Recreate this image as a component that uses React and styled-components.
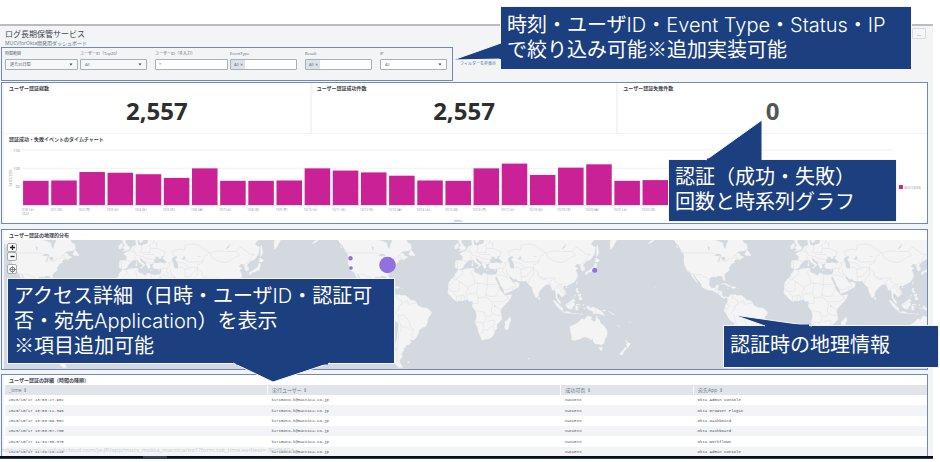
import React from "react";
import styled, { createGlobalStyle } from "styled-components";

const navy = "#1c3f80";
const frameBlue = "#7089b5";

const GlobalStyle = createGlobalStyle`
  *, *::before, *::after { box-sizing: border-box; }
  body {
    margin: 0;
    background: #fff;
    color: #3c444d;
    font-family: "Open Sans", "Noto Sans CJK JP", sans-serif;
  }
  button, input, select { font: inherit; color: inherit; }
`;

const Page = styled.div`
  position: relative;
  padding: 24px 7px 3px 0;
  overflow: hidden;
`;

const Shell = styled.main`
  border-top: 2px solid #bcbcbc;
  background: #f2f4f6;
  padding: 0 5px 0 1px;
`;

const Header = styled.header`
  display: flex;
  justify-content: space-between;
  align-items: flex-start;
  height: 21px;
  padding: 2px 2px 0 4px;
`;

const Title = styled.h1`
  margin: 0;
  font-size: 8px;
  line-height: 12px;
  font-weight: 400;
`;

const Subtitle = styled.p`
  margin: 0;
  font-size: 5px;
  line-height: 6px;
  color: #6b747e;
`;

const MoreButton = styled.button`
  width: 14px;
  height: 11px;
  padding: 0;
  border: 1px solid #d5dae0;
  border-radius: 1px;
  background: #f5f6f8;
  font-size: 5px;
  line-height: 6px;
`;

const FilterRow = styled.div`
  display: flex;
  align-items: center;
  gap: 7px;
  margin-bottom: 1px;
`;

const FilterForm = styled.form`
  display: grid;
  grid-template-columns: repeat(6, 75px);
  border: 1px solid ${frameBlue};
  padding: 3px 0 10px 3px;
  width: 452px;
`;

const Field = styled.div`
  display: flex;
  flex-direction: column;
  gap: 2px;
  width: ${(p) => (p.$wide ? 73 : 67)}px;
`;

const Label = styled.label`
  font-size: 4px;
  line-height: 6px;
  color: #5c656f;
`;

const controlBox = `
  width: 100%;
  height: 11px;
  border: 1px solid #a6b0bd;
  border-radius: 1px;
  font-size: 4px;
  line-height: 8px;
  color: #5c656f;
`;

const SelectBox = styled.div`
  position: relative;
  display: flex;
`;

const Select = styled.select`
  ${controlBox}
  appearance: none;
  background: ${(p) => (p.$plain ? "#fff" : "#f5f7f9")};
  padding: 0 8px 0 4px;
`;

const Caret = styled.svg`
  position: absolute;
  right: 5px;
  top: 4px;
  width: 4px;
  height: 3px;
  pointer-events: none;
`;

const Input = styled.input`
  ${controlBox}
  background: #fff;
  padding: 0 3px;
`;

const TokenBox = styled.div`
  ${controlBox}
  display: flex;
  background: #fff;
`;

const Token = styled.button`
  flex: none;
  border: 0;
  background: #dde2e9;
  padding: 0 2px 0 3px;
  line-height: 9px;
`;

const TokenInput = styled.input`
  flex: 1;
  min-width: 0;
  border: 0;
  padding: 0 2px;
  background: transparent;
`;

const HideLink = styled.a`
  font-size: 4px;
  line-height: 6px;
  color: #5670a0;
  text-decoration: none;
`;

const Frame = styled.section`
  position: relative;
  border: 1px solid ${frameBlue};
  padding-left: 2px;
  background: #f2f4f6;
  margin-bottom: ${(p) => p.$gap || 0}px;
`;

const StatRow = styled.div`
  display: grid;
  grid-template-columns: 305fr 304fr 308fr;
  gap: 2px;
  margin-bottom: 1px;
`;

const Panel = styled.article`
  background: #fff;
  padding-top: 1px;
`;

const PanelTitle = styled.h2`
  margin: 0 0 0 5px;
  font-size: 5px;
  line-height: 8px;
  font-weight: 700;
  color: #3c444d;
`;

const BigNumber = styled.p`
  margin: 0;
  height: 41px;
  text-align: center;
  font-size: 24px;
  line-height: 38px;
  font-weight: 700;
  color: ${(p) => (p.$muted ? "#555" : "#2e2e2e")};
`;

const ChartSvg = styled.svg`
  display: block;
  width: 100%;
  height: auto;
  font-size: 4px;
  fill: #8b9198;
`;

const Tick = styled.text`
  font-size: 3px;
`;

const MapBox = styled.div`
  position: relative;
  padding-top: 1px;
`;

const MapSvg = styled.svg`
  display: block;
  width: 100%;
  height: auto;
  background: #d4d9e0;
`;

const MapControls = styled.div`
  position: absolute;
  left: 3px;
  top: 4px;
  display: flex;
  flex-direction: column;
`;

const MapButton = styled.button`
  display: flex;
  align-items: center;
  justify-content: center;
  width: 10px;
  height: ${(p) => (p.$tall ? 10 : 9)}px;
  margin-top: ${(p) => (p.$tall ? 3 : 0)}px;
  padding: 0;
  border: 1px solid #a9adb2;
  border-radius: 2px;
  background: #fafafa;
`;

const DataFrame = styled(Frame)`
  height: 82px;
  border-bottom: 0;
  overflow: hidden;
`;

const Table = styled.table`
  width: 100%;
  height: 72px;
  margin-top: 1px;
  table-layout: fixed;
  border-collapse: collapse;
`;

const Th = styled.th`
  width: ${(p) => p.$w};
  height: 10px;
  padding: 0 4px;
  text-align: left;
  font-size: 5px;
  line-height: 10px;
  font-weight: 400;
  color: #6b747e;
  background: #e1e5ea;
  border-left: 1px solid #f8f9fa;
`;

const Row = styled.tr`
  background: #fff;
  &:nth-child(even) { background: #f2f4f6; }
`;

const Td = styled.td`
  padding: 0 4px;
  font-family: "Liberation Mono", monospace;
  font-size: 4px;
  line-height: 8px;
  color: #4c525a;
`;

const StatusUrl = styled.p`
  position: absolute;
  left: 2px;
  bottom: 8px;
  margin: 0;
  font-size: 6px;
  line-height: 7px;
  white-space: nowrap;
  color: #c9d0dc;
`;

const Taskbar = styled.footer`
  height: 3px;
  background: linear-gradient(90deg, transparent 143px, #3a3d44 143px, #3a3d44 167px, transparent 167px), #0c0d12;
  border-bottom: 1px solid ${navy};
`;

const Callout = styled.aside`
  position: absolute;
  left: ${(p) => p.$x}px;
  top: ${(p) => p.$y}px;
  width: ${(p) => p.$w}px;
  height: ${(p) => p.$h}px;
  padding: ${(p) => p.$pad || 3}px 0 0 6px;
  background: ${navy};
  box-shadow: 0 0 0 1px #f3f6fb;
  color: #fff;
  font-family: "Noto Sans CJK JP", sans-serif;
  font-weight: 400;
  font-size: 20px;
  line-height: 25px;
  white-space: nowrap;
`;

const Latin = styled.span`
  font-family: "Inter", sans-serif;
  font-weight: 300;
  line-height: 0;
`;

const Tail = styled.svg`
  position: absolute;
  left: 0;
  top: 0;
  width: 100%;
  height: 100%;
  overflow: visible;
  pointer-events: none;
`;

const values = [
  66, 67, 90, 88, 84, 74, 100, 66, 66, 67, 100, 94, 89, 80, 67, 66, 100, 113, 82, 102, 111, 66, 68,
];
const weekdays = "日月火水木金土";

function TimeChart() {
  const pitch = 28.13;
  return (
    <ChartSvg viewBox="0 0 922 80" role="img" aria-label="認証成功・失敗イベントのタイムチャート">
      {[150, 100, 50, 0].map((v) => (
        <g key={v}>
          <path d={`M18 ${62 - (v * 55) / 150}H889`} stroke={v ? "#eff1f3" : "#d9dce0"} strokeWidth="1" />
          {v > 0 && <text x="16" y={63.5 - (v * 55) / 150} textAnchor="end">{v}</text>}
        </g>
      ))}
      {values.map((v, i) => (
        <g key={i}>
          <rect x={19 + i * pitch} y={62 - (v * 55) / 150} width="25.5" height={(v * 55) / 150} fill="#cb2196" />
          <Tick x={18 + i * pitch} y="68">
            {i === 0 ? "9/30" : `10/${i}`} ({weekdays[(i + 6) % 7]})
          </Tick>
        </g>
      ))}
      <Tick x="18" y="72">2023</Tick>
      <text x="453" y="79" textAnchor="middle">_time</text>
      <text transform="translate(7.5 35) rotate(-90)" textAnchor="middle">SUCCESS</text>
      <rect x="894" y="42" width="4" height="4" fill="#cb2196" />
      <text x="899" y="45.5">SUCCESS</text>
    </ChartSvg>
  );
}

/* Coastlines as flat longitude, latitude lists. */
const land = [
  [-168,66,-165,61,-162,58.7,-157.5,58.7,-158,57.5,-163,55,-160,55.5,-154,58,-152,60,-148,60.5,-145,60.3,-140,59.7,-136,58,-133,55.5,-130,54,-128,51.5,-125,50,-123,49,-124.7,48.4,-124,46,-124.4,43,-124,40.3,-122.5,37.8,-120.6,34.6,-118,33.8,-117,32.5,-115.7,30,-114,28,-112.2,26,-110.5,24,-109.5,23,-110,24.5,-111.5,26.5,-113,28.5,-114.8,31.5,-113,31.2,-111,28,-109,26,-107,24,-105.5,22,-105.5,20,-103.5,18.3,-101,17.3,-97,15.8,-94.5,16.2,-92,14.5,-89,13.3,-87.5,12.8,-85.7,10.5,-83.5,8.5,-81,7.5,-79.5,9,-78,8,-77.5,8.5,-79.5,9.5,-82,9,-83.7,11,-83.3,15,-86,15.8,-88.5,15.8,-88,18.2,-87,21.3,-90,21,-90.7,19,-92,18.5,-94.5,18.2,-96,19.5,-97.5,22,-97.2,26,-97,28,-94.5,29.5,-91.5,29.4,-89.3,29.3,-88.5,30.3,-85.5,30,-84,30,-82.7,28.5,-82,26.5,-81,25.2,-80.2,26,-80.5,28.3,-81.3,30.5,-80,32.5,-77.8,34,-75.7,35.5,-76.2,37.5,-74,40,-72,41.2,-70,41.8,-70.7,43,-67.5,44.6,-65,45.3,-66,43.6,-63,44.7,-60,46,-64,47,-65,49,-69,48,-66,50.2,-60,50.3,-56,52,-57,54.5,-61,56,-62,58.5,-65,60,-70,61,-77,62,-78,59,-77,56.5,-79,54.5,-79.5,51.5,-82,53,-82.5,55.3,-88,56.6,-92.5,57.2,-94.5,59,-95,64,-120,68],
  [-59.3,47.7,-57,51.3,-55.5,50,-53,48,-53,46.7,-56,47],
  [-84.8,22,-82,23.1,-79,22.7,-75,20.7,-74.5,20.2,-77.5,19.9,-78,21,-81.5,22.3],
  [-74,18.5,-73,19.9,-70,19.7,-68.5,18.6,-71,18],
  [-78,18.3,-77,18.5,-76.3,17.9,-77.5,17.8],
  [-77.5,8.5,-76,9.5,-75,11,-72,12,-71.5,10.8,-70,12,-68,10.7,-64,10.5,-62,10.5,-60,8.5,-57,6,-52,4.8,-50,1,-48,-.8,-44,-2.5,-40,-2.8,-37,-5,-35,-6.5,-35,-9,-37.5,-12,-39,-15,-39.2,-18,-41,-22,-44.5,-23,-48,-25.5,-48.7,-28.5,-52,-33,-54,-34.8,-58,-34.3,-57,-36.5,-58,-38.3,-62,-39,-62.5,-41,-65,-41.5,-64,-42.7,-67.3,-46,-66,-48,-69,-50.5,-68.5,-52.5,-65.5,-54.8,-69,-55.5,-73,-53.5,-75.3,-50,-75.5,-46.5,-73,-43,-73.7,-39,-72,-34,-71.4,-30,-70.4,-24,-70.3,-18.5,-74.5,-16,-76.5,-13.5,-79,-8.5,-81.2,-6,-81,-4,-80,-2.5,-80.5,-.5,-79,1.5,-77.5,3.5,-77.5,6.5],
  [-6,35.8,-2,35.1,1,36.5,5,36.8,10,37.3,11,36.8,10.5,34.3,13,32.9,15.3,32.3,18,30.5,20,31,20,32.7,23,32.6,25,31.6,29,30.9,31,31.5,34,31.2,34.7,29.5,33,28.5,35.5,24,37.2,21,37.5,18.5,39.5,15.5,43,12,43.3,11.5,45,10.5,51,11.8,50.8,9.5,48,5,45,2,41.5,-1.7,39.5,-4.5,39,-7,40.5,-10.7,40.5,-15,37.5,-17.7,35,-20,35.4,-24,32.8,-26,32.5,-28.5,30.5,-31.5,27.5,-33.3,22,-34.2,19.7,-34.8,18.3,-34,18,-32,15.2,-27,14.4,-22.5,11.8,-17.5,13.5,-12.5,13.4,-9,12.2,-5.8,9,-1,9.5,3.5,8.5,4.7,5.5,4.4,4.3,6.3,1,6,-2,4.8,-4.5,5.2,-7.7,4.4,-11.5,6.8,-13.3,9,-15,11,-16.8,12.5,-17.5,14.7,-16.3,18,-17,21,-16,23.7,-13.5,27.5,-10,29.5,-9.7,31.5,-8,33.5],
  [49.3,-12,50.5,-15.7,49,-18,47.5,-24.5,45.2,-25.5,43.5,-23,44.3,-20,44,-17,46.5,-15.7],
  [-9,43.2,-9.4,38.8,-8.8,37,-6.5,37,-5.4,36,-2,36.8,-.5,38,0,39.5,3,42,5,43.3,7.5,43.8,10,44,11,42.4,15.5,40,16,38,17,39,18.3,40,15,42,12.5,44.5,13.7,45.6,15.5,44,19.5,41.8,19.4,40.2,21.5,37,23,36.5,24,38,23,40.2,26,40.8,28.8,41,26.2,39.5,27.2,37,30.5,36.3,32.5,36.1,36,36.8,35.8,34,34.3,31.2,35,29.5,37,26.5,39,21.5,42.5,17,43.4,12.7,48,14,52,15.8,55.3,17.8,57.8,19,59.8,22.5,56.5,24.3,54,24.2,51.5,24.8,51.5,26,50,26.5,48.5,29,48.8,30.3,50.7,29.2,52.5,27.4,56.5,27,57.3,25.6,61.5,25.2,66.5,25.3,68,23.7,70.3,20.8,72.8,19.5,73.5,16,76,10,77.5,8,79.8,10.3,80.3,14,82.2,16.7,86.8,20.8,89,21.8,91.5,22.5,94,18.5,94.5,16,97.3,17,98.5,13,98.5,8.5,101,4,103.5,1.4,103.3,4.5,100.3,7.5,99.3,10,100,13.3,102.2,12.2,104.8,8.7,107,10.5,109.2,12.5,108.5,15.5,106,18.5,106.8,21,110,20.5,114,22.4,117.5,24,120,26.5,122,30,120.5,34,119.3,35.2,122.4,37.2,118.5,38.2,121.3,40.8,124.5,40,125,37.7,126.5,34.5,129.3,35.5,129,37.5,127.5,39.7,131,42.7,135.5,44.2,139.5,48,141,53,137,54,136,55,143,59.3,152,59,156,61.5,164,62.5,162,58,156.5,57,156.8,51,160,53.5,162.8,56.5,166,60,178,63,178,70,20,72,5,62,5.2,59,8,58.1,11,59,13,55.5,16,56.5,17,59,18.8,60,17.5,62,21.5,64,25,65.3,21.5,62,22,60.3,29,60.2,28,59.5,23.5,59.2,24,57,21.5,57.5,21,55.3,18.5,54.7,14,54,11,54.2,10.5,56,10.5,57.7,8.2,57,8.7,54,5,53.4,3,51.5,1.5,50.2,-1.5,49.6,-4.7,48.6,-1.5,46.5,-1.5,43.5],
  [-5.5,50,-3,51.4,-5,52,-4.5,53.4,-3,54,-5,55,-6,57,-5,58.6,-2,57.6,-3,56,-1,54.5,1.7,52.7,1.3,51.2],
  [-10,51.7,-9.7,54,-7,55.3,-5.7,54.5,-6.3,52.2],
  [-24,65.5,-22,64,-18,63.4,-14,65,-17,66.2],
  [8.3,39,8.5,41,9.7,41,9.6,39.2],[8.7,42,9.4,42.9,9.4,41.5],[12.5,37.8,15.5,38.1,15,36.7],[23.6,35.4,26.2,35.2,24.8,34.9],[32.4,34.8,34.3,35.5,33.5,34.7],
  [79.8,9.5,81.8,7,80.5,6,79.8,7.5],
  [95.3,5.6,97.5,5,100.5,2,103.7,-1.2,106,-3,105.8,-5.8,102.5,-4,99,0],
  [105.2,-6.6,108.5,-6.6,111,-6.4,114.5,-7.7,114.3,-8.7,108,-7.7],
  [109,1.5,111.3,2.5,115,5,117,7,119,5.2,117.7,3,118.8,1,116.5,-1.5,115.8,-4,111.7,-3.3,110,-1.5],
  [120,1,124.8,1.5,123,.5,120.3,.3,121,-1,123.2,-1,121.7,-2.3,122.6,-5,121,-4,120.3,-5.6,119.5,-3.3],
  [131,-.8,134,-.8,135,-3.3,138,-1.7,141,-2.6,145.7,-5.2,147.5,-6.3,150.7,-10.5,147,-9.5,143.5,-8.5,141,-9.1,138,-8.3,138.5,-6.5,133,-4,132,-2.8],
  [148.3,-5.6,152,-4.5,151.5,-5.7,149,-6.2],[155,-6,159.5,-8.5,162,-10.5,160,-9.7,156,-7.3],[164,-20.2,167,-22.3,165.5,-21.7],
  [115,-8.4,119,-8.5,123,-8.4,119,-9],[124,-10.2,127.2,-8.5,125,-9],[127.5,1.5,128.5,1,128,-.8],[128,-3.2,130.7,-3.3,129,-3.5],
  [120.5,18.3,122.2,18.3,121.6,16,124,13,123,13.5,120.7,14,120,16],[122,11.7,125.3,12.2,125,10.2,123,9.2],[122,7,125.5,9.7,126.4,7,125.4,5.7,124,6.5],[117.3,8.5,119.5,11.3,118.5,9.5],
  [120.2,23,121.5,25.2,121.9,25,120.8,22],[108.7,19,110.7,20,110,18.4],
  [130,33,131,34,135,35.5,137,37,139.5,38.5,140,41,141.5,41.3,142,39.5,140.8,36,139.8,35,137,34.7,135.7,33.5,133.5,33.5,131.5,31.3,130.3,31.3],
  [140,42,141.7,45.4,145.3,43.5,143.3,42,141,42.5],[142,46.5,142,53,143,54.2,144.5,49,143,47],
  [113.5,-22,114,-26.5,115.8,-32,115,-34.3,118,-35,123.5,-33.9,129,-31.7,134.2,-33,136,-34.8,137.8,-33,138.2,-35.5,140.5,-38,144.5,-38.2,146.5,-39,150,-37.5,151,-34,153,-31,153.5,-28,152.8,-25,149,-20.3,146.3,-18.8,145.3,-15,143.5,-14.3,142.5,-10.8,141.3,-14,140.7,-17.5,138.5,-16.7,135.7,-15,137,-12.2,132.5,-11.3,130.5,-12.7,129.3,-15,126,-14,122.3,-18,118.8,-20],
  [144.7,-40.8,148.2,-40.9,148,-43,146.5,-43.6,145.4,-42.3],
  [172.7,-34.5,175.5,-36.7,178.5,-37.7,177,-39.5,175.2,-41.6,174.8,-39.8,173.8,-39.2,174.8,-37.5],
  [172.7,-40.5,174.3,-41.7,171,-44.3,170.5,-46,168.5,-46.7,166.5,-46,170.5,-43],
  [-61,-51.5,-58,-51.5,-59.5,-52.3],[-67,18.4,-65.7,18.2,-66.8,18],[177.5,-17.5,178.5,-18,177.5,-18.2],[-156,20,-155,19.5,-155.7,19],[69,-49,70.3,-49.4,69,-49.7],
  [-132,54,-131,53,-131.5,52.2],[-128,50.7,-125,49.6,-123.5,48.4,-126,49.2],
];

const water = [
  [-92,46.7,-88.5,48.6,-85,47.8,-84.5,46.5,-88,46.7],
  [-87.8,42,-87.5,44,-86,46,-84.8,45.7,-86.4,44,-86.5,42],
  [-84,46,-80,45.8,-80,44.6,-81.7,43.3,-83.5,43.8],
  [-83.3,41.7,-79,42.9,-81,42.6],[-79.7,43.4,-76.3,43.5,-76.5,44.1],
  [-98,51,-97,50.5,-97,53,-99,53.5],
  [28,43.5,28,41.8,31.5,41.2,35,42,38.5,41,41.5,41.6,39,44,37,45,39,47,35.5,46.4,36.5,45.3,33.5,44.5,32.7,46,30.7,46.3],
  [47.2,43,49,41,49,38,51,36.7,53.8,37,53.5,40,52.7,42,50.5,44.5,53,45.5,51.5,47,47.7,45.5],
  [58.5,44,61.5,44.5,60.5,46.7,58.5,45.5],[32,-.5,33,.4,34.2,-.5,33,-2.5],
  [104,51.5,109.5,55,108,52.5],[74,46,79,46.6,76,46.8],
];

const borders = [
  [-123,49,-95,49,-90,48,-84.5,46.5,-82.5,43,-79,43.2,-75,45,-71,45.2,-69,47.4,-67.5,44.7],
  [-117,32.5,-111,31.3,-106.5,31.7,-103,29,-101,29.6,-97.2,26],
  [-92,14.5,-90,17.5,-88.5,17.5],[-85.7,11,-83.7,11],[-89,14.3,-86,13.8,-83.3,15],
  [-72,12,-72.5,8,-67.5,6,-67,1.2,-70,-.5,-70,-4.2,-73.5,-7,-70.5,-11,-65.5,-10,-60.3,-14,-58,-19.5,-58,-22,-54.5,-24,-54,-27,-57.5,-30,-53.5,-33.5],
  [-70.5,-11,-69,-17.5,-67,-23,-70,-30,-70.5,-36,-71.7,-43,-72,-51,-68.5,-52.3],
  [-67,-22.5,-62.5,-22,-57.7,-25.5,-54.5,-25.5],[-67,1.2,-64,4,-60,5,-60,1.5,-52,2.5,-51.5,4.2],[-79,1.5,-75,0,-78,-4,-80.4,-4],
  [-2,35,-1,32,-8.7,27.5,-13,27.6],[-8.7,27.3,4.5,19,12,23.5,25,22,37,22],[10,37,8,34,9.5,30,12,23.5],[25,31.6,25,20,24,15,23,11,28,9.5,34,10,36,14,38,17],
  [-17,20.8,-12.5,23,-8.7,27],[-5,25,-5.5,15.5,-12,15,-16,16.5],[4.5,19,3.5,15,1,13,4,12,13.5,13.5,15,23],[3,6.4,3.5,12],[13.5,13.5,15,8,15,2,9.5,2.2],[-12,15,-11,12.5,-8,10,-5,10.3,0,11],[-8,10,-8,7,-7.5,4.5],[-3,5,-3,11,0,11,1,6],
  [15,8,19,9,24,9,27.5,5,31,3.5,36,4.5,42,4,48,8,43,11.5],[12,-5.8,17,-6,22,-7.5,22,-11,24,-13,22,-18,12,-17.3],[31,3.5,30,-2,29.5,-6,30.5,-8.5,28,-12,24,-11],[34,-1,39,-4.6],[30.5,-8.5,34,-10,40.5,-10.7],[20,-18,21,-22,20,-28,17,-28.7],[21,-25,25,-25.7,29.5,-22,31.3,-22.4,32,-26],[25,-18,28,-16,33,-16,33,-20,31.3,-22.4],
  [-9,42,-6.7,41.8,-7.3,37.2],[-1.7,43.3,3,42.5],[7.5,43.8,7,46,9.5,47.5,13,46.5,16.5,46.5,18.7,45.5,22,44.5,28.5,43.8],[2.5,51,6,49.5,8,49,7.5,47.5],[6,49.5,7,53.2],[14,54,15,51,12.5,50,14,48.8,19,49.5,23,49,24,52,23,54,28,56,27.5,59],[16,48,22,48,27,48,30,45.5],[19,45,20.5,42,22.5,41.3,26,41.7,28,42],[24,52,31,52,34,51.5,40,49.5,38,47],[31,52,31,55,28,56],
  [36,37,42,37,44.5,39.5,43.5,41.3,48,41.8],[42,37,41,34,47,30.3],[45,37,46,33,48.5,30],[35,29.3,38,31.5,44.7,29,47.7,28.5],[43,17,47,17,52,19,52,16],[52,19,55,20,55,22.7,51.5,24.2],[54,37.3,57,38,61,36.5,61,31,61.7,25.2],[61,36,66,37.4,71,38,74.5,37,70,33,66.5,29.5,61,29.7],[74.5,37,74,34,74.5,31,70.5,28,70,24.5,68,23.8],
  [49,46.5,47,50,55,51.5,61,51,61,54,70,55,77,54,83,51,87,49.2,98,50.5,107,50,116,50,120,53,127,50,131,47.8,135,48.3,131,45,130.7,42.5],[87,49.2,91,45.2,96,42.7,105,41.7,111,44,116,46.5,120,47,116,50],[87,49,83,47,80,44.5,80,42,74,39.5,74.5,37,79,34,79,31,84,28.5,88.5,28,97,28.5,98.5,24,102,22.5,106.5,21.7],[56,45.2,62,43.5,67,42,71,42.5,80,42.3],[53.8,42,57,41.5,61,41.2,66,37.4],[80,30,83,27.5,88,26.5],[92,21,92,25,97,28],[98,17,99,20,101,21,102,18,105,15.5,102.5,13.5],[102,22,104.5,19,107.5,15,107,11.5],[124.5,40,129.5,42.3],[126.5,37.8,128.5,38.5],
  [109.8,1.8,112,1.3,115,3,117.7,4.2],[141,-2.6,141,-9.1],
];

const worldWidth = 336;
const mapScale = worldWidth / (2 * Math.PI);

function trace(shape, closed) {
  let d = "";
  for (let i = 0; i < shape.length; i += 2) {
    const x = (shape[i] / 360) * worldWidth;
    const y = 65.5 - mapScale * Math.log(Math.tan(Math.PI / 4 + (shape[i + 1] * Math.PI) / 360));
    d += `${i ? "L" : "M"}${x.toFixed(1)} ${y.toFixed(1)}`;
  }
  return closed ? d + "Z" : d;
}

const landPath = land.map((s) => trace(s, true)).join("");
const waterPath = water.map((s) => trace(s, true)).join("");
const borderPath = borders.map((s) => trace(s, false)).join("");

function WorldMap() {
  return (
    <MapSvg viewBox="0 0 923 129" role="img" aria-label="ユーザー認証の地理的分布">
      {[124, 460, 796].map((x) => (
        <g key={x} transform={`translate(${x} 0)`}>
          <path d={landPath} fill="#f4f4f4" stroke="#f4f4f4" strokeWidth="0.3" />
          <path d={waterPath} fill="#d4d9e0" />
          <path d={borderPath} fill="none" stroke="#dfe1e4" strokeWidth="0.6" />
        </g>
      ))}
      <g fill="#9170e0">
        <circle cx="383.5" cy="25" r="8.3" />
        <circle cx="346.5" cy="18.3" r="2.2" />
        <circle cx="347" cy="28" r="1.8" />
        <circle cx="590.7" cy="30.3" r="2.5" />
      </g>
    </MapSvg>
  );
}

function Dropdown({ id, label, value, wide, plain }) {
  return (
    <Field $wide={wide}>
      <Label htmlFor={id}>{label}</Label>
      <SelectBox>
        <Select id={id} $plain={plain} defaultValue={value}>
          <option>{value}</option>
        </Select>
        <Caret viewBox="0 0 4 3"><path d="M0.5 0.5h3L2 2.5z" fill="#3c444d" /></Caret>
      </SelectBox>
    </Field>
  );
}

function TokenField({ id, label }) {
  return (
    <Field>
      <Label htmlFor={id}>{label}</Label>
      <TokenBox>
        <Token type="button">All ✕</Token>
        <TokenInput id={id} />
      </TokenBox>
    </Field>
  );
}

const stats = [
  { title: "ユーザー認証総数", value: "2,557" },
  { title: "ユーザー認証成功件数", value: "2,557" },
  { title: "ユーザー認証失敗件数", value: "0", muted: true },
];

const columns = [
  ["_time", "28.5%"],
  ["実行ユーザー", "31.8%"],
  ["成功可否", "14.4%"],
  ["宛先App", "25.3%"],
];

const rows = [
  ["2023/10/17 13:53:27.902", "Okta Admin Console"],
  ["2023/10/17 13:53:11.396", "Okta Browser Plugin"],
  ["2023/10/17 13:53:09.552", "Okta Dashboard"],
  ["2023/10/17 13:53:07.765", "Okta Dashboard"],
  ["2023/10/17 11:34:30.375", "Okta Workflows"],
  ["2023/10/17 11:34:16.225", "Okta Admin Console"],
];

export default function App() {
  return (
    <Page>
      <GlobalStyle />
      <Shell>
        <Header>
          <div>
            <Title>ログ長期保管サービス</Title>
            <Subtitle>MUCVforOkta開発用ダッシュボード</Subtitle>
          </div>
          <MoreButton type="button" aria-label="メニュー">...</MoreButton>
        </Header>

        <FilterRow>
          <FilterForm>
            <Dropdown id="range" label="時間範囲" value="過去30日間" wide />
            <Dropdown id="user" label="ユーザーID（Top20）" value="All" />
            <Field $wide>
              <Label htmlFor="manual">ユーザーID（手入力）</Label>
              <Input id="manual" defaultValue="*" />
            </Field>
            <TokenField id="event" label="EventType" />
            <TokenField id="result" label="Result" />
            <Dropdown id="ip" label="IP" value="All" plain />
          </FilterForm>
          <HideLink href="#filters">フィルターを非表示</HideLink>
        </FilterRow>

        <Frame $gap={5}>
          <StatRow>
            {stats.map((s) => (
              <Panel key={s.title}>
                <PanelTitle>{s.title}</PanelTitle>
                <BigNumber $muted={s.muted}>{s.value}</BigNumber>
              </Panel>
            ))}
          </StatRow>
          <Panel>
            <PanelTitle>認証成功・失敗イベントのタイムチャート</PanelTitle>
            <TimeChart />
          </Panel>
        </Frame>

        <Frame $gap={4}>
          <Panel>
            <PanelTitle>ユーザー認証の地理的分布</PanelTitle>
            <MapBox>
              <WorldMap />
              <MapControls>
                <MapButton type="button" aria-label="拡大">
                  <svg width="5" height="5" viewBox="0 0 5 5"><path d="M0 2.5h5M2.5 0v5" stroke="#222" strokeWidth="1.3" /></svg>
                </MapButton>
                <MapButton type="button" aria-label="縮小">
                  <svg width="5" height="5" viewBox="0 0 5 5"><path d="M0.5 2.5h4" stroke="#222" strokeWidth="1.3" /></svg>
                </MapButton>
                <MapButton type="button" aria-label="中央に戻す" $tall>
                  <svg width="7" height="7" viewBox="0 0 7 7">
                    <circle cx="3.5" cy="3.5" r="2.3" fill="none" stroke="#777" />
                    <path d="M3.5 0v7M0 3.5h7" stroke="#777" strokeWidth="0.8" />
                  </svg>
                </MapButton>
              </MapControls>
            </MapBox>
          </Panel>
        </Frame>

        <DataFrame>
          <Panel>
            <PanelTitle>ユーザー認証の詳細（時間の降順）</PanelTitle>
            <Table>
              <thead>
                <tr>{columns.map(([name, w]) => <Th key={name} $w={w}>{name} ⇕</Th>)}</tr>
              </thead>
              <tbody>
                {rows.map(([time, app]) => (
                  <Row key={time}>
                    <Td>{time}</Td>
                    <Td>kirimoto-k@macnica.co.jp</Td>
                    <Td>SUCCESS</Td>
                    <Td>{app}</Td>
                  </Row>
                ))}
              </tbody>
            </Table>
          </Panel>
        </DataFrame>
      </Shell>
      <Taskbar />
      <StatusUrl>https://macnica.splunkcloud.com/ja-JP/app/mucv_mokta_macnica/no1?form.tok_time.earliest=-30d%40d</StatusUrl>

      <Callout $x={501} $y={7} $w={410} $h={62} $pad={4}>
        <Tail><path d="M0 36L-48 53L0 52" fill={navy} stroke="#f3f6fb" /><path d="M0 37v15" stroke={navy} strokeWidth="3" /></Tail>
        時刻・ユーザ<Latin>ID</Latin>・<Latin>Event Type</Latin>・<Latin>Status</Latin>・<Latin>IP</Latin>
        <br />で絞り込み可能※追加実装可能
      </Callout>
      <Callout $x={669} $y={160} $w={227} $h={61}>
        <Tail><path d="M37 0L93 -40V0" fill={navy} stroke="#f3f6fb" /><path d="M38 0h54" stroke={navy} strokeWidth="3" /></Tail>
        認証（成功・失敗）<br />回数と時系列グラフ
      </Callout>
      <Callout $x={8} $y={279} $w={386} $h={84}>
        <Tail><path d="M225 84L265 103L322 84" fill={navy} stroke="#f3f6fb" /><path d="M228 84h92" stroke={navy} strokeWidth="3" /></Tail>
        アクセス詳細（日時・ユーザ<Latin>ID</Latin>・認証可<br />否・宛先<Latin>Application</Latin>）を表示<br />※項目追加可能
      </Callout>
      <Callout $x={724} $y={326} $w={214} $h={41} $pad={5}>
        <Tail><path d="M41 0L10 -11L88 0" fill={navy} stroke="#f3f6fb" /><path d="M43 0h42" stroke={navy} strokeWidth="3" /></Tail>
        認証時の地理情報
      </Callout>
    </Page>
  );
}
